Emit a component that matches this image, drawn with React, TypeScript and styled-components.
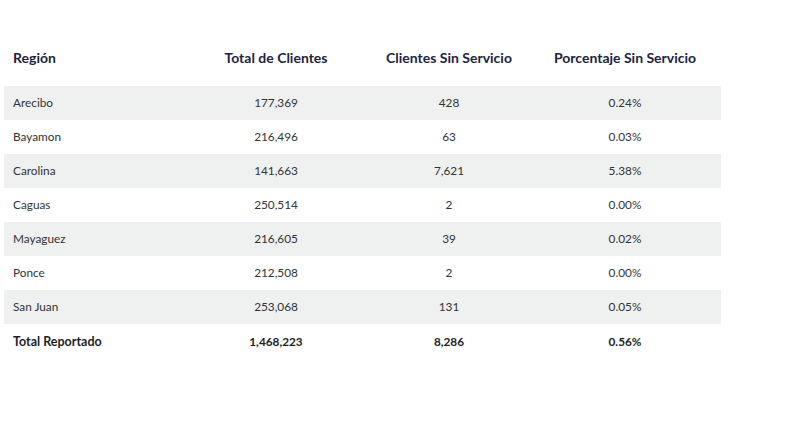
import React from "react";
import styled, { createGlobalStyle } from "styled-components";

const Global = createGlobalStyle`
  html, body { margin: 0; padding: 0; background: #ffffff; }
  body { font-family: Lato, "Noto Sans", sans-serif; }
`;

const Page = styled.div`
  padding: 30px 0 0 4px;
`;

const Table = styled.div`
  width: 717px;
  display: flex;
  flex-direction: column;
`;

const Row = styled.div<{ $shaded?: boolean; $head?: boolean }>`
  display: grid;
  grid-template-columns: 179px 186px 160px 192px;
  align-items: center;
  height: ${(p) => (p.$head ? "56px" : "34px")};
  background: ${(p) => (p.$shaded ? "#eff0f0" : "transparent")};
`;

const Cell = styled.div<{ $bold?: boolean; $head?: boolean; $left?: boolean }>`
  text-align: ${(p) => (p.$left ? "left" : "center")};
  padding-left: ${(p) => (p.$left ? "9px" : "0")};
  font-size: ${(p) => (p.$head ? "14px" : p.$bold ? (p.$left ? "12.5px" : "11.8px") : "11.8px")};
  font-weight: ${(p) => (p.$bold || p.$head ? 700 : 400)};
  color: ${(p) => (p.$head ? "#1c2340" : p.$bold ? "#1e1e24" : "#333338")};
  line-height: 1;
  white-space: nowrap;
  margin-top: ${(p) => (p.$bold ? "2px" : "-1px")};
`;

const data = [
  ["Arecibo", "177,369", "428", "0.24%"],
  ["Bayamon", "216,496", "63", "0.03%"],
  ["Carolina", "141,663", "7,621", "5.38%"],
  ["Caguas", "250,514", "2", "0.00%"],
  ["Mayaguez", "216,605", "39", "0.02%"],
  ["Ponce", "212,508", "2", "0.00%"],
  ["San Juan", "253,068", "131", "0.05%"],
];

export default function App() {
  return (
    <Page>
      <Global />
      <Table>
        <Row $head>
          <Cell $head $left>Región</Cell>
          <Cell $head>Total de Clientes</Cell>
          <Cell $head>Clientes Sin Servicio</Cell>
          <Cell $head>Porcentaje Sin Servicio</Cell>
        </Row>
        {data.map((r, i) => (
          <Row key={r[0]} $shaded={i % 2 === 0}>
            <Cell $left>{r[0]}</Cell>
            <Cell>{r[1]}</Cell>
            <Cell>{r[2]}</Cell>
            <Cell>{r[3]}</Cell>
          </Row>
        ))}
        <Row>
          <Cell $bold $left>Total Reportado</Cell>
          <Cell $bold>1,468,223</Cell>
          <Cell $bold>8,286</Cell>
          <Cell $bold>0.56%</Cell>
        </Row>
      </Table>
    </Page>
  );
}
